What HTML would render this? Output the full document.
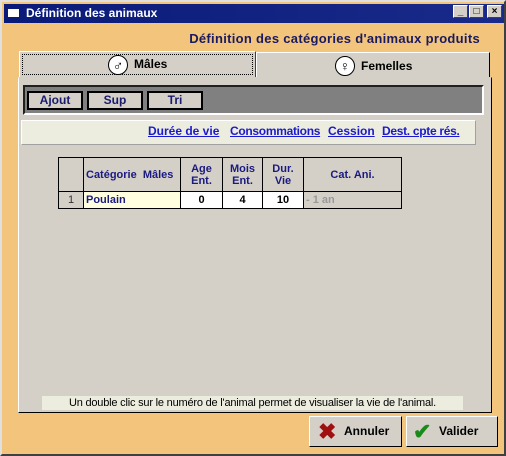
<!DOCTYPE html>
<html><head><style>
*{margin:0;padding:0;box-sizing:border-box}
body{width:506px;height:456px;overflow:hidden;font-family:"Liberation Sans",sans-serif;background:#000}
.win{position:absolute;left:0;top:0;width:506px;height:456px;background:#f2c47c;border:2px solid #e0e0e0;border-right-color:#404040;border-bottom-color:#404040}
.title{position:absolute;left:2px;top:2px;width:500px;height:19px;background:linear-gradient(90deg,#0a1a78,#1a2a8a);color:#fff;font-weight:bold;font-size:12px;line-height:19px;padding-left:22px}
.tb{position:absolute;top:3px;width:15px;height:13px;background:#d4d0c8;border:1px solid;border-color:#fff #404040 #404040 #fff;font-size:10px;line-height:11px;text-align:center;color:#000;font-weight:bold}
.abs{position:absolute}
.btn{position:absolute;top:89px;width:56px;height:19px;background:#d4d0c8;border:2px solid #000;font-size:12px;font-weight:bold;color:#1a1a6e;text-align:center;line-height:15px}
a{color:#1a1acc;font-weight:bold;font-size:12px;text-decoration:underline;white-space:nowrap}
table{border-collapse:collapse;font-size:11px;font-weight:bold;color:#1a1a80;table-layout:fixed}
td{border:1px solid #000;text-align:center;overflow:hidden;white-space:nowrap}
</style></head><body>
<div class="win">
<div class="title">Définition des animaux</div>
<div class="abs" style="left:6px;top:7px;width:11px;height:8px;background:#fff"></div>
<div class="tb" style="left:451px">_</div><div class="tb" style="left:467px">□</div><div class="tb" style="left:485px">×</div>
<div class="abs" style="left:150px;top:29px;width:328px;text-align:right;font-size:13px;font-weight:bold;color:#1a1a60;white-space:nowrap;letter-spacing:0.3px">Définition des catégories d'animaux produits</div>
<div class="abs" style="left:17px;top:49px;width:237px;height:27px;background:#d4d0c8;border:1px solid;border-color:#fff #404040 #d4d0c8 #fff"><div class="abs" style="left:2px;top:2px;right:2px;bottom:2px;border:1px dotted #000"></div><div class="abs" style="left:88px;top:3px;width:20px;height:20px;border-radius:50%;border:1px solid #000;background:#fff;text-align:center;font-size:14px;line-height:18px;font-weight:bold">♂</div><div class="abs" style="left:114px;top:5px;font-size:12px;font-weight:bold">Mâles</div></div>
<div class="abs" style="left:254px;top:50px;width:234px;height:26px;background:#d4d0c8;border:1px solid;border-color:#fff #000 #d4d0c8 #fff"><div class="abs" style="left:78px;top:3px;width:20px;height:20px;border-radius:50%;border:1px solid #000;background:#fff;text-align:center;font-size:14px;line-height:18px;font-weight:bold">♀</div><div class="abs" style="left:104px;top:6px;font-size:12px;font-weight:bold">Femelles</div></div>
<div class="abs" style="left:16px;top:75px;width:474px;height:336px;background:#d4d0c8;border:1px solid;border-color:#d4d0c8 #000 #000 #fff"></div>
<div class="abs" style="left:21px;top:83px;width:461px;height:30px;background:#808080;border:2px solid;border-color:#202020 #fff #fff #202020"></div>
<div class="btn" style="left:25px">Ajout</div><div class="btn" style="left:85px">Sup</div><div class="btn" style="left:145px">Tri</div>
<div class="abs" style="left:19px;top:118px;width:455px;height:25px;background:#ececdf;border:1px solid;border-color:#fff #a0a0a0 #a0a0a0 #fff"></div>
<a class="abs" style="left:146px;top:122px">Durée de vie</a>
<a class="abs" style="left:228px;top:122px;letter-spacing:-0.3px">Consommations</a>
<a class="abs" style="left:326px;top:122px">Cession</a>
<a class="abs" style="left:380px;top:122px;letter-spacing:-0.3px">Dest. cpte rés.</a>
<table class="abs" style="left:56px;top:155px;width:343px">
<colgroup><col style="width:25px"><col style="width:97px"><col style="width:42px"><col style="width:40px"><col style="width:41px"><col style="width:98px"></colgroup>
<tr style="height:34px;background:#d4d0c8"><td></td><td style="text-align:left;padding-left:2px">Catégorie&nbsp; Mâles</td><td>Age<br>Ent.</td><td>Mois<br>Ent.</td><td>Dur.<br>Vie</td><td>Cat. Ani.</td></tr>
<tr style="height:17px"><td style="background:#d4d0c8;font-weight:normal;color:#333">1</td><td style="background:#ffffe0;text-align:left;padding-left:2px">Poulain</td><td style="background:#fff;color:#000">0</td><td style="background:#fff;color:#000">4</td><td style="background:#fff;color:#000">10</td><td style="background:#d4d0c8;color:#999;text-align:left;padding-left:2px">- 1 an</td></tr>
</table>
<div class="abs" style="left:40px;top:394px;width:421px;height:14px;background:#ececdf;font-size:11px;text-align:center;line-height:14px;color:#000;white-space:nowrap;letter-spacing:-0.2px">Un double clic sur le numéro de l'animal permet de visualiser la vie de l'animal.</div>
<div class="abs" style="left:307px;top:414px;width:93px;height:31px;background:#d4d0c8;border:1px solid;border-color:#fff #000 #000 #fff;font-size:12px;font-weight:bold;line-height:29px"><span style="position:absolute;left:8px;top:0;color:#a01010;font-size:22px">✖</span><span style="position:absolute;left:34px">Annuler</span></div>
<div class="abs" style="left:404px;top:414px;width:92px;height:31px;background:#d4d0c8;border:1px solid;border-color:#fff #000 #000 #fff;font-size:12px;font-weight:bold;line-height:29px"><span style="position:absolute;left:6px;top:0;color:#1a8a1a;font-size:22px">✔</span><span style="position:absolute;left:32px">Valider</span></div>
</div>
</body></html>
